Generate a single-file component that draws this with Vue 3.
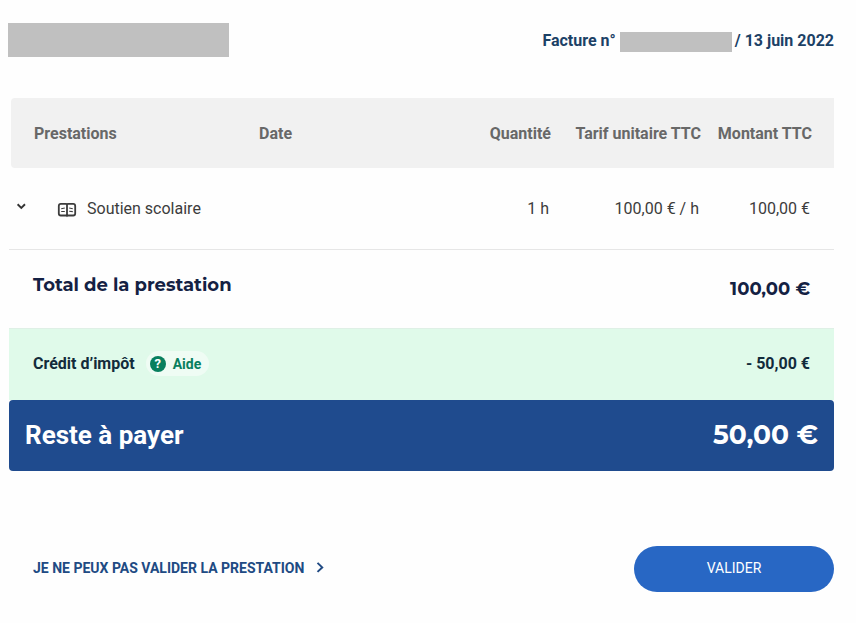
<script setup>
const lines = [
  { id: 1, label: 'Soutien scolaire', date: '', quantity: '1 h', rate: '100,00 € / h', amount: '100,00 €' }
];
</script>

<template>
  <main class="invoice">
    <header class="invoice-header">
      <div class="masked masked-name"></div>
      <div class="invoice-ref">
        <span class="invoice-number">Facture n°</span>
        <span class="masked masked-number"></span>
        <span class="invoice-date">/ 13 juin 2022</span>
      </div>
    </header>

    <div class="grid table-head">
      <div class="head-label">Prestations</div>
      <div class="head-date">Date</div>
      <div class="head-quantity">Quantité</div>
      <div class="head-rate">Tarif unitaire TTC</div>
      <div class="head-amount">Montant TTC</div>
    </div>

    <div v-for="line in lines" :key="line.id" class="grid table-row">
      <div class="service">
        <svg class="chevron" width="10" height="7" viewBox="0 0 10 7">
          <path d="M1.6 1.3 5.3 4.9 9 1.3" />
        </svg>
        <!-- Open book -->
        <svg class="book" width="20" height="16" viewBox="0 0 20 16">
          <path class="book-cover" d="M3.8 1.9H8.6Q9.6 1.9 10 2.3Q10.4 1.9 11.4 1.9H16.2Q18.2 1.9 18.2 3.9V11.5Q18.2 13.5 16.2 13.5H11.4Q10.4 13.5 10 13.9Q9.6 13.5 8.6 13.5H3.8Q1.8 13.5 1.8 11.5V3.9Q1.8 1.9 3.8 1.9ZM10 2.3V13.8" />
          <path class="book-lines" d="M4.2 6.8 7.8 6M4.2 9.5H7.8M12.2 6 15.8 6.8M12.2 9.2 15.8 9.6" />
        </svg>
        <span class="service-name">{{ line.label }}</span>
      </div>
      <div>{{ line.date }}</div>
      <div class="cell-quantity">{{ line.quantity }}</div>
      <div class="cell-rate">{{ line.rate }}</div>
      <div class="cell-amount">{{ line.amount }}</div>
    </div>

    <div class="total">
      <span class="total-label">Total de la prestation</span>
      <span class="total-amount">100,00 €</span>
    </div>

    <div class="credit">
      <span class="credit-label">Crédit d’impôt</span>
      <button type="button" class="help">
        <span class="help-icon">?</span>
        <span class="help-text">Aide</span>
      </button>
      <span class="credit-amount">- 50,00 €</span>
    </div>

    <div class="due">
      <span class="due-label">Reste à payer</span>
      <span class="due-amount">50,00 €</span>
    </div>

    <footer class="actions">
      <a class="refuse">
        <span class="refuse-text">JE NE PEUX PAS VALIDER LA PRESTATION</span>
        <svg width="8" height="12" viewBox="0 0 8 12">
          <path d="M1.5 0.9 6.2 5.4 1.5 9.9" />
        </svg>
      </a>
      <button type="button" class="validate">VALIDER</button>
    </footer>
  </main>
</template>

<style>
body {
  background: #fff;
}
</style>

<style scoped>
.invoice {
  box-sizing: border-box;
  width: 856px;
  height: 623px;
  padding: 0 22px 0 9px;
  font-family: Roboto, sans-serif;
  font-size: 16px;
  line-height: 20px;
  color: #3c3c3c;
  background: #fefefe;
  white-space: nowrap;
  overflow: hidden;
}

.invoice-header {
  display: flex;
  justify-content: space-between;
  height: 75px;
  margin-left: -1px;
  padding-top: 23px;
}

.masked {
  background: #c0c0c0;
}

.masked-name {
  width: 221px;
  height: 34px;
}

.invoice-ref {
  display: flex;
  height: 20px;
  padding-top: 9px;
  font-weight: 700;
  line-height: 18px;
  color: #1c4166;
}

.masked-number {
  width: 112px;
  margin: 0 3px 0 4px;
}

.grid {
  display: grid;
  grid-template-columns: 225px 150px 142px 150px 1fr;
  align-items: center;
  text-align: right;
}

.table-head {
  height: 70px;
  margin-left: 2px;
  padding: 2px 22px 0 23px;
  box-sizing: border-box;
  border-radius: 4px 0 0 4px;
  background: #f1f1f1;
  font-weight: 700;
  color: #686868;
}

.head-label,
.head-date {
  text-align: left;
}

.table-row {
  height: 82px;
  padding: 0 24px 0 25px;
  box-sizing: border-box;
  border-bottom: 1px solid #e6e6e6;
}

.cell-quantity,
.cell-rate {
  padding-right: 2px;
}

.service {
  display: flex;
  align-items: center;
  margin-left: -18px;
}

.chevron {
  margin: 0 31px 4px 0;
  fill: none;
  stroke: #333;
  stroke-width: 1.9;
}

.book {
  margin: 2px 10px 0 0;
  fill: none;
  stroke: #3c3c3c;
}

.book-cover {
  stroke-width: 1.8;
}

.book-lines {
  stroke-width: 1.1;
}

.total {
  display: flex;
  justify-content: space-between;
  height: 78px;
  padding: 0 24px;
  box-sizing: border-box;
  font-family: Montserrat, Inter, sans-serif;
  font-size: 18px;
  font-weight: 700;
  color: #142143;
}

.total-label {
  padding-top: 25px;
}

.total-amount {
  padding-top: 29px;
}

.credit {
  display: flex;
  align-items: center;
  height: 72px;
  padding: 0 24px 2px;
  box-sizing: border-box;
  border-top: 1px solid #dff0e6;
  background: #e0faea;
  font-weight: 700;
  color: #122b3b;
}

.help {
  display: flex;
  align-items: center;
  gap: 7px;
  height: 25px;
  margin-left: 11px;
  padding: 0 8px 0 4px;
  border: 0;
  border-radius: 13px;
  background: #effcf4;
  font: 700 14px/20px Roboto, sans-serif;
  color: #087f5e;
}

.help-icon {
  width: 16px;
  height: 16px;
  border-radius: 50%;
  background: #087f5e;
  color: #fff;
  font-size: 13px;
  line-height: 16px;
  text-align: center;
}

.credit-amount {
  margin-left: auto;
}

.due {
  display: flex;
  align-items: center;
  justify-content: space-between;
  height: 71px;
  padding: 0 16px 2px;
  box-sizing: border-box;
  border-radius: 4px;
  background: #1f4b8e;
  font-size: 26px;
  font-weight: 700;
  line-height: 32px;
  color: #fff;
}

.due-amount {
  font-family: Montserrat, Inter, sans-serif;
  font-size: 26.5px;
}

.actions {
  display: flex;
  justify-content: space-between;
  align-items: center;
  height: 46px;
  margin-top: 75px;
  padding-left: 24px;
}

.refuse {
  display: flex;
  align-items: center;
  gap: 12px;
  margin-top: -2px;
  font-size: 14px;
  font-weight: 700;
  color: #204a83;
}

.refuse svg {
  fill: none;
  stroke: #204a83;
  stroke-width: 2;
}

.validate {
  width: 200px;
  height: 46px;
  padding: 0 0 2px;
  border: 0;
  border-radius: 23px;
  background: #2867c4;
  font: 400 14px/20px Roboto, sans-serif;
  color: #fff;
}
</style>
